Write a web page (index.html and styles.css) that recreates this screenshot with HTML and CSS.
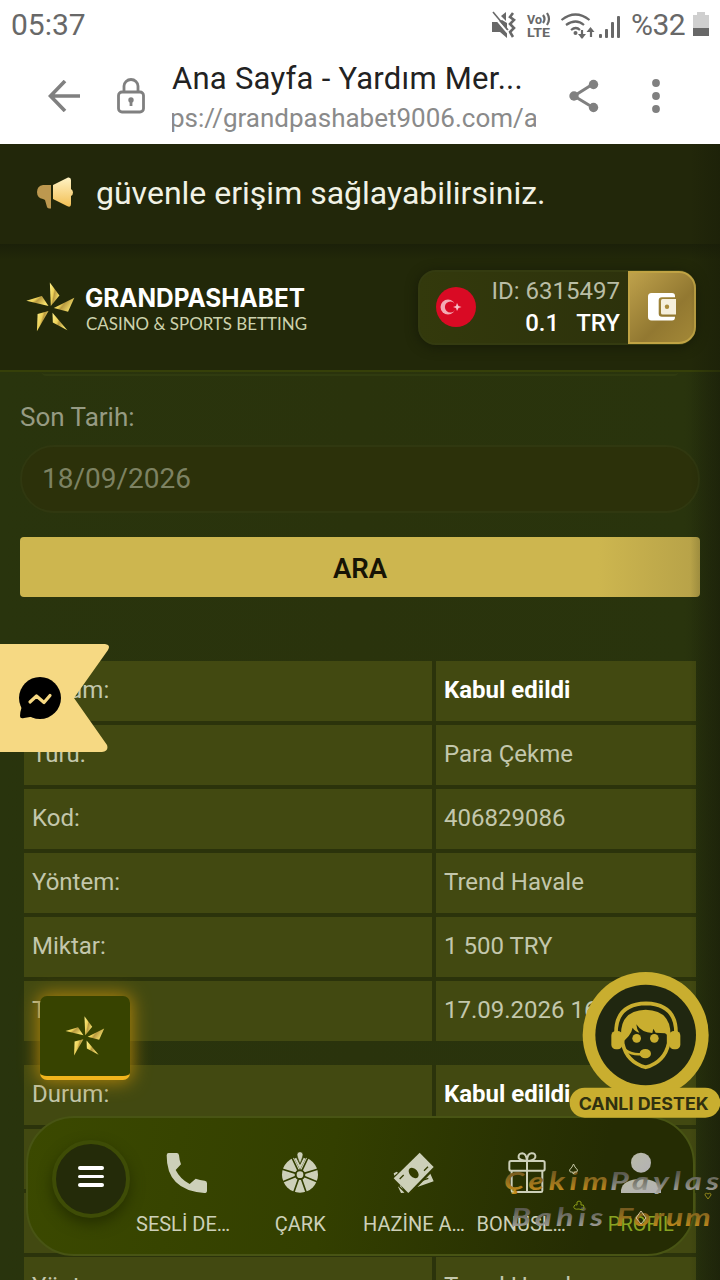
FILE: index.html
```html
<!DOCTYPE html>
<html lang="tr">
<head>
<meta charset="utf-8">
<title>Ana Sayfa - Yardım Merkezi</title>
<link rel="stylesheet" href="styles.css">
</head>
<body>
<svg class="defs" width="0" height="0">
  <defs>
    <linearGradient id="gold" x1="0" y1="0" x2="1" y2="0.5">
      <stop offset="0" stop-color="#fff08a"/><stop offset=".45" stop-color="#ecd158"/><stop offset=".58" stop-color="#b99a40"/><stop offset="1" stop-color="#f7e26c"/>
    </linearGradient>
    <linearGradient id="horn" x1="0" y1="0" x2="0" y2="1">
      <stop offset="0" stop-color="#fff3c4"/><stop offset="1" stop-color="#f2bf55"/>
    </linearGradient>
    <linearGradient id="wmGold" x1="0" y1="0" x2="0" y2="1">
      <stop offset="0" stop-color="#5d4a20"/><stop offset=".5" stop-color="#8f6c1e"/><stop offset="1" stop-color="#d0951c"/>
    </linearGradient>
    <linearGradient id="wmGray" x1="0" y1="0" x2="0" y2="1">
      <stop offset="0" stop-color="#3f3e33"/><stop offset=".55" stop-color="#77776c"/><stop offset="1" stop-color="#b0b0ab"/>
    </linearGradient>
    <linearGradient id="person" x1="0" y1="0" x2="1" y2="1">
      <stop offset="0" stop-color="#b9bba8"/><stop offset="1" stop-color="#b3b1b4"/>
    </linearGradient>
    <symbol id="pinwheel" viewBox="78 66 148 150">
      <path d="M150 67 179 106 153 138Z"/>
      <path d="M224 113 205 155 162 144Z"/>
      <path d="M203 211 159 188 158 158Z"/>
      <path d="M111 214 113 162 146 153Z"/>
      <path d="M79 122 126 108 146 138Z"/>
    </symbol>
  </defs>
</svg>
<div class="phone">
  <header class="status">
    <span class="clock">05:37</span>
    <svg class="status-icons" viewBox="0 0 145 32">
      <g fill="#686868">
        <path d="M1 10h5l5-2 5 3v15l-7-6H1z"/>
        <path d="M10 4l5-4v9z"/>
        <path d="M22 1l-3 4 4 3-4 4 4 4-4 4 3 5" fill="none" stroke="#686868" stroke-width="2.6"/>
        <path d="M0 1 17 21" stroke="#fff" stroke-width="2"/>
        <path d="M2 0 17 18" stroke="#686868" stroke-width="1.600"/>
        <text x="36" y="12" textLength="15" lengthAdjust="spacingAndGlyphs" class="volte">Vo</text>
        <text x="36" y="25" textLength="23" lengthAdjust="spacingAndGlyphs" class="volte">LTE</text>
        <g fill="none" stroke="#686868" stroke-width="2.2">
          <path d="M52 3q3 4 0 8M56 1q4 6 0 12"/>
          <path d="M70.500 8q14-11 28 0M75 13q10-7 18 0M80 18q5-4 9 0"/>
          <path d="M91 18v8M100 17v8"/>
        </g>
        <circle cx="84.500" cy="21" r="2"/>
        <path d="M87 22h8l-4 5zM95.500 20h8l-4-5z"/>
        <rect x="108" y="22" width="3" height="4" rx="1"/><rect x="114" y="17" width="3" height="9" rx="1"/><rect x="120" y="10" width="3" height="16" rx="1"/><rect x="126" y="4" width="3" height="22" rx="1"/>
      </g>
    </svg>
    <span class="percent">%32</span>
    <svg class="battery" viewBox="0 0 16 24"><path d="M4 0h8v3h4v13H0V3h4z" fill="#cfcfcf"/><path d="M0 16h16v8H0z" fill="#686868"/></svg>
  </header>

  <section class="browser">
    <svg class="back" viewBox="0 0 32 32" fill="none" stroke="#808080" stroke-width="3.600"><path d="M17 1 2.500 16 17 31M2.500 16H32"/></svg>
    <svg class="lock" viewBox="0 0 28 36" fill="none" stroke="#808080" stroke-width="2.800"><rect x="1.500" y="14" width="25" height="20" rx="3.500"/><path d="M7 14V8a7 6.500 0 0 1 14 0v6M14 20v8"/><circle cx="14" cy="22" r="1.300"/></svg>
    <div class="address">
      <div class="page-title">Ana Sayfa - Yardım Mer...</div>
      <div class="url">ps://grandpashabet9006.com/a</div>
    </div>
    <svg class="share" viewBox="0 0 30 34" fill="#808080"><path d="M24 5 5 17 24 28.500" fill="none" stroke="#808080" stroke-width="3"/><circle cx="24.500" cy="5.500" r="4.700"/><circle cx="5" cy="17" r="4.700"/><circle cx="24.500" cy="28.500" r="4.700"/></svg>
    <svg class="dots" viewBox="0 0 8 34" fill="#808080"><circle cx="4" cy="4" r="3.900"/><circle cx="4" cy="17" r="3.900"/><circle cx="4" cy="30" r="3.900"/></svg>
  </section>

  <main class="site">
    <div class="notice">
      <svg class="horn" viewBox="0 0 36 32"><path d="M14 8H6Q0 9 0 15t6 7l2 1 2 7q.500 1.500 4 1.500z" fill="#bd984f"/><path d="M16 8 31 .500Q34 0 34 3v9q2 1 2 3.500T34 19v8q0 4-4 2L16 22z" fill="url(#horn)"/></svg>
      <span>güvenle erişim sağlayabilirsiniz.</span>
    </div>
    <div class="topbar">
      <div class="logo">
        <svg class="star"><use href="#pinwheel" fill="url(#gold)"/></svg>
        <svg class="wordmark" viewBox="0 0 224 50">
          <text class="word" x="0" y="25" textLength="220" lengthAdjust="spacingAndGlyphs">GRANDPASHABET</text>
          <text class="tagline" x="1" y="48" textLength="221" lengthAdjust="spacingAndGlyphs">CASINO &amp; SPORTS BETTING</text>
        </svg>
      </div>
      <div class="account">
        <svg class="flag" viewBox="0 0 40 40"><circle cx="20" cy="20" r="20" fill="#d90a24"/><circle cx="12" cy="20" r="7.500" fill="#f3aab3"/><circle cx="14.500" cy="20" r="5.600" fill="#d90a24"/><path d="m17 20 3-1 1-3 1.500 3 3 1-3 1-1.500 3-1-3z" fill="#f6c2c8"/></svg>
        <div class="balance">
          <span>ID: 6315497</span>
          <strong><span>0.1</span><span>TRY</span></strong>
        </div>
        <div class="wallet"><svg viewBox="0 0 28 28"><path d="M3.500 0H24q3 0 3 3v1.300H14q-3.300 0-3.300 3.300v12.800q0 3.300 3.300 3.300h13v.300q0 3.500-3 3.500H3.500Q0 27.200 0 24V3.500Q0 0 3.500 0z" fill="#fff"/><path d="M14.500 6H28v15.500H14.500q-1.500 0-1.500-1.500V7.500Q13 6 14.500 6z" fill="#f5efdc"/><circle cx="19" cy="13.700" r="2.200" fill="#a98a39"/></svg></div>
      </div>
    </div>

    <form class="filter">
      <div class="input-edge"></div>
      <label>Son Tarih:</label>
      <div class="date">18/09/2026</div>
      <button type="button">ARA</button>
    </form>

    <div class="records">
      <div class="record">
        <div>Durum:</div><div class="done">Kabul edildi</div>
        <div>Türü:</div><div>Para Çekme</div>
        <div>Kod:</div><div>406829086</div>
        <div>Yöntem:</div><div>Trend Havale</div>
        <div>Miktar:</div><div>1 500 TRY</div>
        <div>Tarih:</div><div>17.09.2026 16:42</div>
      </div>
      <div class="record">
        <div>Durum:</div><div class="done">Kabul edildi</div>
        <div></div><div></div>
        <div></div><div></div>
        <div>Yöntem:</div><div>Trend Havale</div>
      </div>
    </div>
    <div class="edge"></div>
  </main>

  <svg class="ribbon" viewBox="0 0 110 108">
    <path d="M0 0H105Q111 1 108 6L74 54 107 101Q109 107 102 108H0Z" fill="#f6d983"/>
    <circle cx="40" cy="54" r="21"/><path d="M22 62Q20 68 20 72q0 3 4 2l12-2z"/>
    <path d="m30 58 6.500-6 7.500 6.500 6-7" fill="none" stroke="#f6d983" stroke-width="3.200" stroke-linecap="round" stroke-linejoin="round"/>
  </svg>

  <div class="shortcut"><svg><use href="#pinwheel" fill="url(#gold)"/></svg></div>

  <nav class="dock">
    <div class="menu"><i></i><i></i><i></i></div>
    <div class="item"><svg viewBox="498 546 126 126"><path d="M506 549h24q6 0 7 7 1 14 6 27l-16 17q14 28 42 42l18-16q13 5 27 6 7 1 7 8v22q0 7-8 7Q499 661 500 556q0-7 6-7z"/></svg><span class="cut">SESLİ DE…</span></div>
    <div class="item"><svg viewBox="150 127 126 126">
      <circle cx="213" cy="195" r="54"/>
      <g stroke="#333f00" stroke-width="5"><path d="M213 195 194 249M213 195 232 249M213 195 266 217M213 195 160 217M213 195 268 178M213 195 158 178M213 195 188 142M213 195 238 142"/></g>
      <path d="m192 139 21 42 21-42-9-6h-22z" fill="#333f00"/><path d="m199 146 14 27 14-27" fill="none" stroke="#cdd0b9" stroke-width="6"/>
      <circle cx="213" cy="195" r="16" fill="#333f00"/><circle cx="213" cy="195" r="10"/>
      <path d="M213 126q9 1 9 9 0 6-9 28-9-22-9-28 0-8 9-9z" stroke="#333f00" stroke-width="2"/></svg><span>ÇARK</span></div>
    <div class="item"><svg viewBox="490 126 126 126"><path d="m601 189 11 25-51 18zM492 190l9-5 4 3-11 9zM505 230l8-4 12 22-11 1z"/><path d="m570 128 42 43-76 78-44-44z"/><g fill="none" stroke="#343d00" stroke-width="4"><path d="m490 211 42 42M541 251l75-77"/><path d="m510 207 12-12M583 182l12-12M580 210l16-5"/></g><ellipse cx="552" cy="189" rx="12" ry="18" transform="rotate(-42 552 189)" fill="#343d00"/></svg><span class="cut">HAZİNE A…</span></div>
    <div class="item"><svg class="outline" viewBox="111 127 126 126"><rect x="121" y="154" width="106" height="29" rx="5"/><path d="M128 183v60q0 4 4 4h84q4 0 4-4v-60M174 154v93M174 154q-21-2-25-9-2-14 11-14 12 1 14 23 1-22 13-23 14-1 12 12-3 10-25 11z"/></svg><span class="cut">BONUSL…</span></div>
    <div class="item active"><svg viewBox="450 126 126 126"><circle cx="513" cy="158" r="30" fill="url(#person)"/><path d="M453 249v-9q5-32 60-33 55 1 60 33v9z" fill="url(#person)"/></svg><span>PROFİL</span></div>
  </nav>

  <svg class="support" viewBox="0 0 480 510">
    <circle cx="257" cy="225" r="189" fill="#c9ae2f"/>
    <rect x="29" y="383" width="452" height="90" rx="45" fill="#c9ae2f"/>
    <circle cx="257" cy="225" r="151" fill="#202710"/>
    <path d="M168 218Q168 132 258 130q90 2 90 88" fill="none" stroke="#c9ae2f" stroke-width="11"/>
    <rect x="154" y="213" width="33" height="55" rx="14" fill="#c9ae2f"/><rect x="328" y="213" width="33" height="55" rx="14" fill="#c9ae2f"/>
    <path d="M188 222v28q12 56 69 72 57-16 69-72v-28" fill="none" stroke="#c9ae2f" stroke-width="11"/>
    <path d="M183 232Q179 151 257 149q79 2 74 83l-16-12-28-2-7-12-3 13q-32-1-48-26 1 16 9 25-14-4-20-15-5 25-35 46z" fill="#c9ae2f"/>
    <circle cx="230" cy="235" r="13" fill="#c9ae2f"/><circle cx="283" cy="235" r="13" fill="#c9ae2f"/>
    <path d="M196 270q22 16 52 12" fill="none" stroke="#c9ae2f" stroke-width="8"/><ellipse cx="256" cy="281" rx="17" ry="14" fill="#c9ae2f"/>
    <text x="56" y="449" textLength="390" lengthAdjust="spacingAndGlyphs" class="support-text">CANLI DESTEK</text>
  </svg>

  <svg class="watermark" viewBox="0 0 220 80">
    <g class="script">
      <text transform="translate(4 30) scale(1.3 1)" textLength="80" fill="url(#wmGold)">Çekim</text>
      <text transform="translate(110 30) scale(1.3 1)" textLength="84" fill="url(#wmGray)">Paylas</text>
      <text transform="translate(11 66) scale(1.3 1)" textLength="71" fill="url(#wmGray)">Bahis</text>
      <text transform="translate(116 66) scale(1.3 1)" textLength="73" fill="url(#wmGold)">Forum</text>
    </g>
    <g fill="none" stroke-width="1">
      <path d="M73.500 4q1 3 4 6 0 3-3 2l-1 2-1-2q-3 1-3-2 3-3 4-6z" stroke="#c5c6a4"/>
      <path d="M79 49q-6 1-5-3 1-2 3-1-1-4 2-4t2 4q3-1 3 2 0 4-5 2z" stroke="#8a9b16"/>
      <path d="m141 51 5 7-5 6-5-6z" stroke="#d8c3a0"/>
      <path d="m208 39-3-4q0-3 3-1 3-2 3 1z" stroke="#91871a"/>
    </g>
  </svg>
</div>
</body>
</html>
```
FILE: styles.css
```css
* { box-sizing: border-box; }
body { margin: 0; font-family: Roboto, "Liberation Sans", sans-serif; }
svg { display: block; flex: none; }
.defs { position: absolute; }
.phone { position: relative; width: 720px; height: 1280px; overflow: hidden; display: flex; flex-direction: column; background: #fff; }

.status { height: 50px; display: flex; align-items: center; padding: 0 11px 2px; color: #686868; font-size: 30px; flex: none; }
.clock { flex: 1; }
.status-icons { width: 145px; height: 32px; margin-top: 8px; margin-right: -5px; overflow: visible; }
.volte { font-size: 13px; font-weight: 700; }
.percent { width: 57px; letter-spacing: -.5px; }
.battery { width: 16px; height: 24px; margin-left: 5px; }

.browser { height: 94px; flex: none; display: flex; align-items: center; padding: 0 0 2px 48px; }
.back { width: 32px; height: 32px; margin-right: 37px; }
.lock { width: 28px; height: 36px; margin-right: 27px; }
.address { width: 364px; overflow: hidden; white-space: nowrap; margin-top: 2px; }
.page-title { font-size: 31px; line-height: 42px; color: #222; letter-spacing: .25px; }
.url { font-size: 26px; line-height: 36px; color: #8a8a8a; margin-left: -2px; }
.share { width: 30px; height: 34px; margin-left: 33px; }
.dots { width: 8px; height: 36px; margin-left: 53px; }

.site { position: relative; flex: 1; min-height: 0; overflow: hidden; background: linear-gradient(90deg, #29340d, #2a330c 50%, #29340d 95%, #232b0c); }
.notice { height: 100px; display: flex; align-items: center; gap: 23px; padding: 0 37px 2px; background: #22270a; color: #f1f2e5; font-size: 32px; white-space: nowrap; }
.horn { width: 36px; height: 32px; }
.topbar { height: 128px; display: flex; justify-content: space-between; align-items: center; padding: 0 24px 0 26px; background: linear-gradient(#1b2009, #222809 12%, #222809); border-bottom: 2px solid #364009; }
.logo { display: flex; align-items: center; gap: 10px; }
.star { width: 49px; height: 50px; }
.wordmark { width: 224px; height: 50px; overflow: visible; }
.word { font: 700 25px Inter, sans-serif; fill: #fff; }
.tagline { font: 400 18px Lato, sans-serif; fill: #cdd2ad; }
.account { width: 278px; height: 75px; display: flex; align-items: center; border: 2px solid #343b10; border-radius: 18px; background: linear-gradient(90deg, #33390c, #2b300c); box-shadow: 0 2px 12px #171b08; padding-left: 16px; }
.flag { width: 40px; height: 40px; }
.balance { flex: 1; display: flex; flex-direction: column; align-items: flex-end; padding-right: 8px; font-size: 24px; line-height: 32px; color: #b9bda5; white-space: nowrap; }
.balance strong { display: flex; gap: 17px; color: #fff; font-weight: 500; }
.wallet { width: 68px; height: 73px; margin-right: -2px; display: grid; place-items: center; background: linear-gradient(135deg, #bea14b, #927831 60%, #a38837); border: 2px solid #c0a344; border-radius: 0 17px 17px 0; }
.wallet svg { width: 28px; height: 28px; }

.filter { padding: 0 20px; display: flex; flex-direction: column; }
.input-edge { height: 4px; margin: 0 22px; border-bottom: 2px solid #303b10; border-radius: 0 0 24px 24px; }
.filter label { margin-top: 23px; height: 36px; line-height: 36px; font-size: 26px; color: #969b83; }
.date { margin-top: 10px; height: 68px; line-height: 64px; padding-left: 20px; border: 2px solid #303810; border-radius: 34px; background: #2c310a; color: #7d8262; font-size: 28px; }
.filter button { margin-top: 24px; height: 60px; padding-top: 3px; border: 0; border-radius: 4px; background: linear-gradient(90deg, #cdb64f 85%, #b6a148); font: 600 27.500px Roboto, sans-serif; color: #171405; }

.records { padding: 64px 24px 0; display: flex; flex-direction: column; gap: 24px; }
.record { display: grid; grid-template-columns: 408px 260px; grid-auto-rows: 60px; gap: 4px; font-size: 24px; line-height: 58px; color: #c3c7ac; white-space: nowrap; background: #2b330b; }
.record > div { background: #424911; padding-left: 8px; }
.record .done { color: #fff; font-weight: 700; }
.edge { position: absolute; right: 0; top: 0; bottom: 0; width: 30px; background: linear-gradient(90deg, transparent, rgba(24, 28, 8, .45)); }

.ribbon { position: absolute; left: 0; top: 644px; width: 110px; height: 108px; }
.shortcut { position: absolute; left: 40px; top: 996px; width: 90px; height: 84px; display: grid; place-items: center; border-radius: 7px; border-bottom: 4px solid #f0b41d; background: #374300; box-shadow: 0 0 18px 2px #ad820b; }
.shortcut svg { width: 40px; height: 40px; }

.dock { position: absolute; left: 26px; top: 1116px; width: 669px; height: 140px; display: flex; padding-left: 24px; border: 2px solid #485414; border-radius: 48px; background: linear-gradient(100deg, #3b4900, #333f00 45%, #252c03 85%); }
.menu { width: 78px; height: 78px; margin-top: 22px; margin-right: 0; border: 4px solid #3e4c06; border-radius: 50%; background: #242b09; box-shadow: 0 6px 14px #263000; display: flex; flex-direction: column; align-items: center; justify-content: center; gap: 5px; flex: none; padding-bottom: 5px; }
.menu i { width: 26px; height: 3.500px; border-radius: 2px; background: #fff; }
.item { width: 113.500px; flex: none; padding: 34px 6px 0; display: flex; flex-direction: column; align-items: center; color: #cdd0b9; font-size: 20px; line-height: 28px; white-space: nowrap; }
.item svg { width: 42px; height: 42px; fill: #cdd0b9; margin-bottom: 16px; }
.item .outline { fill: none; stroke: #cdd0b9; stroke-width: 6; }
.item .cut { align-self: stretch; }
.active span { color: #88a421; }

.support { position: absolute; left: 560px; top: 960px; width: 160px; height: 170px; overflow: visible; }
.support-text { font: 700 51px Inter, sans-serif; fill: #30300f; }
.watermark { position: absolute; left: 500px; top: 1160px; width: 220px; height: 80px; }
.script { font: italic 700 25px Lato, sans-serif; }
```
